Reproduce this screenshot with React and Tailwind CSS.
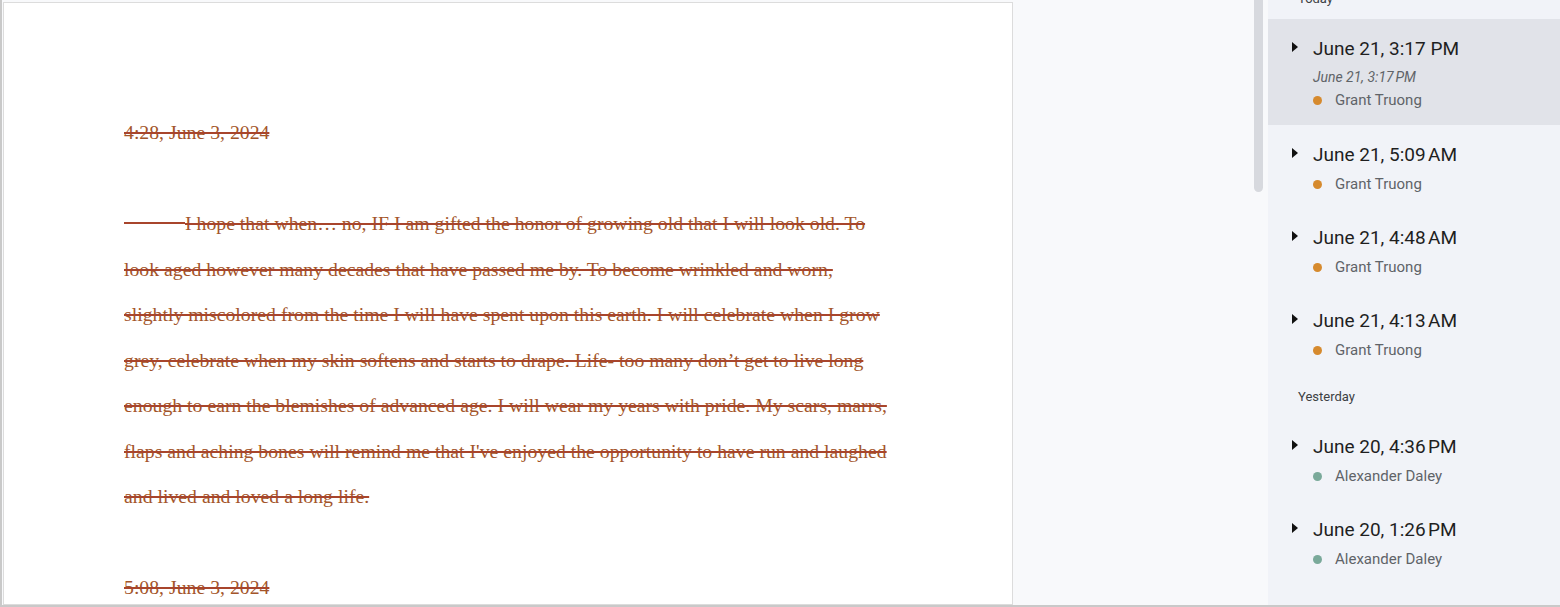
const docLines = [
  { text: "4:28, June 3, 2024" },
  { text: "" },
  { text: "I hope that when… no, IF I am gifted the honor of growing old that I will look old. To", indent: true },
  { text: "look aged however many decades that have passed me by. To become wrinkled and worn," },
  { text: "slightly miscolored from the time I will have spent upon this earth. I will celebrate when I grow" },
  { text: "grey, celebrate when my skin softens and starts to drape. Life- too many don’t get to live long" },
  { text: "enough to earn the blemishes of advanced age. I will wear my years with pride. My scars, marrs," },
  { text: "flaps and aching bones will remind me that I've enjoyed the opportunity to have run and laughed" },
  { text: "and lived and loved a long life." },
  { text: "" },
  { text: "5:08, June 3, 2024" },
];

const groups = [
  {
    label: "Today",
    items: [
      { title: "June 21, 3:17 PM", sub: "June 21, 3:17\u202fPM", name: "Grant Truong", dot: "bg-[#d68a2e]", selected: true },
      { title: "June 21, 5:09\u202fAM", name: "Grant Truong", dot: "bg-[#d68a2e]" },
      { title: "June 21, 4:48\u202fAM", name: "Grant Truong", dot: "bg-[#d68a2e]" },
      { title: "June 21, 4:13\u202fAM", name: "Grant Truong", dot: "bg-[#d68a2e]" },
    ],
  },
  {
    label: "Yesterday",
    items: [
      { title: "June 20, 4:36\u202fPM", name: "Alexander Daley", dot: "bg-[#7aa99a]" },
      { title: "June 20, 1:26\u202fPM", name: "Alexander Daley", dot: "bg-[#7aa99a]" },
    ],
  },
];

function Caret() {
  return (
    <svg width="6" height="10" viewBox="0 0 6 10" className="mt-[5px] shrink-0">
      <path d="M0 0 L6 5 L0 10 Z" fill="#111" />
    </svg>
  );
}

function VersionItem({ item }) {
  return (
    <div
      className={
        item.selected
          ? "flex gap-[15px] bg-[#e1e3e9] pl-[24px] pt-[18px] pb-[14px]"
          : "flex gap-[15px] pl-[24px] pt-[18px] pb-[13px]"
      }
    >
      <Caret />
      <div className="flex flex-col">
        <div className="text-[19px] leading-[24px] text-[#1f1f1f]">{item.title}</div>
        {item.sub && (
          <div className="mt-[6px] text-[14px] italic leading-[20px] text-[#5f6368]">{item.sub}</div>
        )}
        <div className={item.sub ? "mt-[2px] flex items-center gap-[13px]" : "mt-[6px] flex items-center gap-[13px]"}>
          <span className={`h-[9px] w-[9px] rounded-full ${item.dot}`} />
          <span className="text-[15px] leading-[22px] text-[#5f6368]">{item.name}</span>
        </div>
      </div>
    </div>
  );
}

export default function App() {
  return (
    <div className="flex h-[607px] w-[1560px] overflow-hidden border-b-2 border-l-2 border-[#c9c9c9] bg-[#f8f9fb]">
      {/* document page */}
      <div className="ml-[1px] mt-[2px] w-[1010px] shrink-0 border border-[#dcdcdc] bg-white pl-[120px] pt-[107px] font-['Liberation_Serif',serif] text-[19.75px] leading-[45.5px] text-[#a3552a]">
        {docLines.map((l, i) => (
          <div key={i} className="h-[45.5px] whitespace-pre">
            {l.indent && (
              <span className="inline-block w-[61px] align-middle">
                <span className="block h-[2px] -translate-y-[2px] bg-[#a8452c]" />
              </span>
            )}
            <span className="line-through decoration-[#a8452c] decoration-[2px]">{l.text}</span>
          </div>
        ))}
      </div>

      {/* scroll area + scrollbar */}
      <div className="flex flex-1 justify-end pr-[5px]">
        <div className="h-[192px] w-[9px] rounded-b-full bg-[#d7d9de]" />
      </div>

      {/* version history */}
      <div className="w-[292px] shrink-0 bg-[#f1f3f8] font-['Roboto',sans-serif]">
        <div className="-mt-[24px] flex flex-col">
          {groups.map((g) => (
            <div key={g.label} className="flex flex-col">
              <div className="pl-[30px] pt-[14px] pb-[11px] text-[13px] leading-[18px] text-[#3c4043]">{g.label}</div>
              {g.items.map((item) => (
                <VersionItem key={item.title} item={item} />
              ))}
            </div>
          ))}
        </div>
      </div>
    </div>
  );
}
